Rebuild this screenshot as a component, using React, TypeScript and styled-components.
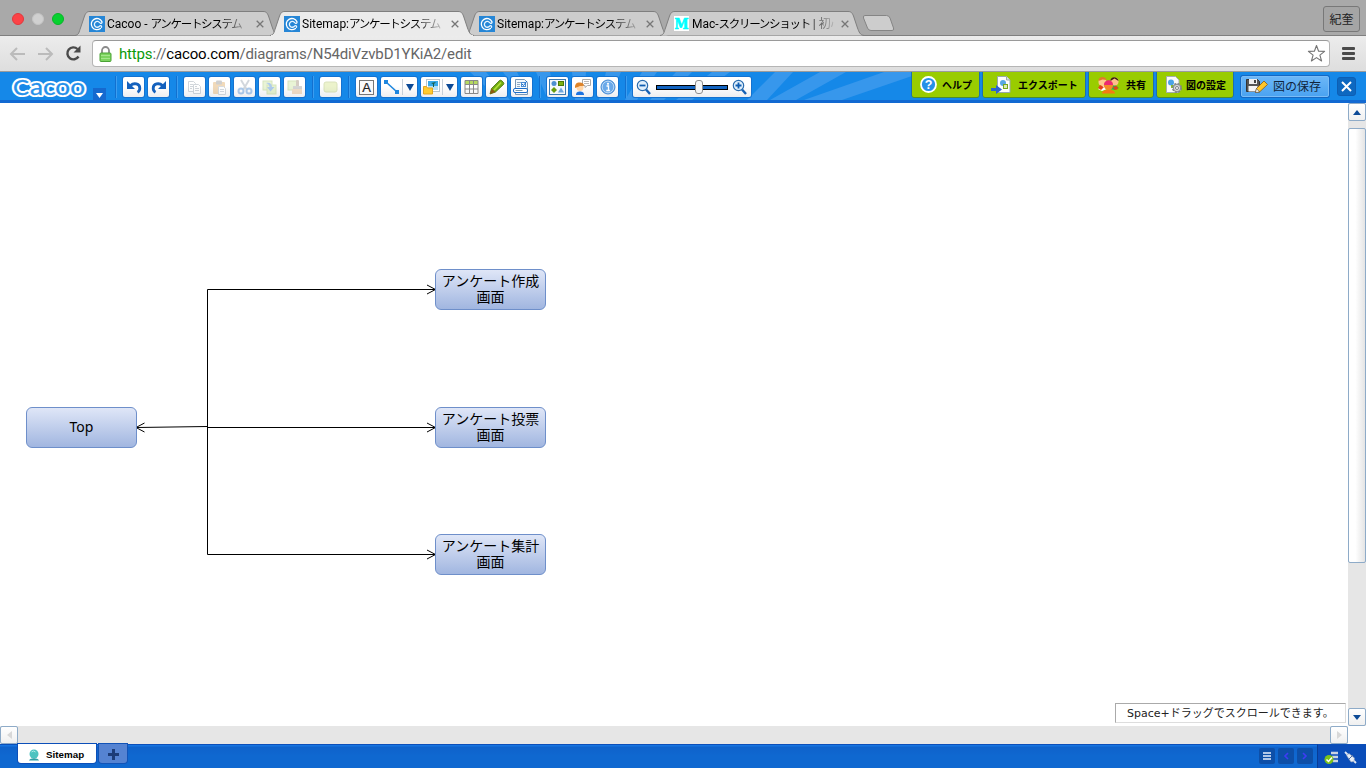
import React from "react";
import styled, { createGlobalStyle, css } from "styled-components";

const jp = `"Noto Sans CJK JP", sans-serif`;

const Global = createGlobalStyle`
  * { box-sizing: border-box; }
  body { margin: 0; overflow: hidden; background: #fff; font-family: Roboto, ${jp}; }
  svg { display: block; flex: none; }
`;

const Window = styled.div`
  width: 1366px;
  height: 768px;
  display: flex;
  flex-direction: column;
  overflow: hidden;
`;

/* ---------- browser frame ---------- */

const TabStrip = styled.div`
  height: 36px;
  flex: none;
  display: flex;
  align-items: flex-end;
  background: #a9a9a9;
  box-shadow: inset 0 -1px #7f7f7f;
`;

const Lights = styled.div`
  display: flex;
  gap: 8px;
  width: 75px;
  padding: 0 0 11px 12px;
`;

const Light = styled.i<{ $fill: string; $edge: string }>`
  width: 12px;
  height: 12px;
  border-radius: 50%;
  background: ${(p) => p.$fill};
  border: 1px solid ${(p) => p.$edge};
`;

const Tab = styled.div<{ $active?: boolean }>`
  position: relative;
  z-index: ${(p) => (p.$active ? 2 : 1)};
  width: 204px;
  height: 25px;
  margin-right: -9px;
  padding: 1px 12px 0 14px;
  display: flex;
  align-items: center;
  gap: 2px;
`;

const TabShape = styled.svg`
  position: absolute;
  left: 0;
  top: 0;
  z-index: -1;
`;

const TabTitle = styled.span`
  width: 142px;
  font: 12px/18px Roboto, ${jp};
  color: #000;
  white-space: nowrap;
  mask-image: linear-gradient(90deg, #000 112px, transparent 146px);
`;

const Kana = styled.span`
  font-size: 11.5px;
  letter-spacing: -1.3px;
`;

const TabClose = styled.svg`
  margin-left: 5px;
`;

const NewTab = styled.svg`
  margin: 0 0 4px 7px;
`;

const Profile = styled.div`
  margin: 0 6px 4px auto;
  width: 37px;
  height: 26px;
  border: 1px solid #787878;
  border-radius: 3px;
  background: #a5a5a5;
  font: 12px/24px ${jp};
  text-align: center;
  color: #222;
`;

const AddressRow = styled.div`
  height: 36px;
  flex: none;
  display: flex;
  align-items: center;
  padding: 0 10px 0 9px;
  background: linear-gradient(#ececec, #dedede);
  border-bottom: 1px solid #9b9b9b;
`;

const NavIcons = styled.div`
  display: flex;
  align-items: center;
  gap: 11px;
  width: 83px;
`;

const AddressBox = styled.div`
  width: 1238px;
  height: 27px;
  display: flex;
  align-items: center;
  padding: 0 3px 0 6px;
  background: #fff;
  border: 1px solid #b5b5b5;
  border-top-color: #9a9a9a;
  border-radius: 4px;
`;

const Url = styled.div`
  flex: 1;
  margin-left: 7px;
  font: 15px/20px Roboto, sans-serif;
  letter-spacing: -0.16px;
  color: #666;
  b { font-weight: 400; color: #0a9a0a; }
  em { font-style: normal; color: #000; }
`;

const MenuBars = styled.div`
  margin-left: 12px;
  width: 13px;
  display: flex;
  flex-direction: column;
  gap: 2px;
  i { height: 3px; border-radius: 1px; background: #4a4a4a; }
`;

/* ---------- editor toolbar ---------- */

const EditorBar = styled.div`
  position: relative;
  z-index: 0;
  height: 31px;
  flex: none;
  display: flex;
  background: #1588e8;
  border-bottom: 3px solid #1269d2;
  padding-left: 11px;
`;

const Rays = styled.svg`
  position: absolute;
  left: 0;
  top: 0;
  z-index: -1;
`;

const Logo = styled.div`
  width: 97px;
  display: flex;
`;

const LogoMenu = styled.div`
  margin: 16px 0 0 5px;
  width: 13px;
  height: 14px;
  background: #1569cf;
  display: flex;
  align-items: center;
  justify-content: center;
`;

const Group = styled.div`
  display: flex;
  gap: 4px;
  padding-top: 5px;
`;

const Separator = styled.i`
  width: 2px;
  height: 22px;
  margin: 4px 6px 0 7px;
  background: linear-gradient(90deg, #1270cf 50%, #3b9df0 50%);
`;

const plate = css`
  background: linear-gradient(#fff 45%, #eceef0);
  border-radius: 2px;
  box-shadow: 0 0 0 1px #1572d0;
`;

const ToolButton = styled.div<{ $disabled?: boolean }>`
  ${plate}
  width: 21px;
  height: 20px;
  display: flex;
  align-items: center;
  justify-content: center;
  svg { opacity: ${(p) => (p.$disabled ? 0.35 : 1)}; }
`;

const SplitButton = styled.div`
  ${plate}
  width: 36px;
  height: 20px;
  display: flex;
  align-items: center;
  > svg:first-child { margin: 0 2px; }
`;

const SplitArrow = styled.span`
  width: 15px;
  height: 16px;
  border-left: 1px solid #c5cfd8;
  display: flex;
  align-items: center;
  justify-content: center;
`;

const ZoomPanel = styled.div`
  ${plate}
  width: 118px;
  height: 20px;
  display: flex;
  align-items: center;
  justify-content: space-between;
  padding: 0 4px 0 3px;
`;

const ZoomTrack = styled.div`
  width: 72px;
  height: 5px;
  border: 1px solid #000;
  background: #1263c0;
  display: flex;
  align-items: center;
  padding-left: 38px;
`;

const ZoomKnob = styled.i`
  width: 8px;
  height: 14px;
  flex: none;
  border: 1px solid #8e8e8e;
  border-radius: 3px;
  background: #f6f6f6;
`;

const Actions = styled.div`
  margin-left: auto;
  display: flex;
  gap: 4px;
  padding-right: 10px;
`;

const GreenButton = styled.div<{ $w: number; $gap: number }>`
  width: ${(p) => p.$w}px;
  height: 25px;
  padding-left: 8px;
  display: flex;
  align-items: center;
  gap: ${(p) => p.$gap}px;
  background: #99cc00;
  border-radius: 0 0 2px 2px;
  box-shadow: 0 1px #4d8b32, 1px 0 #1c6fb0, -1px 0 #1c6fb0;
  font: 700 10px/24px ${jp};
  color: #000;
  white-space: nowrap;
`;

const SaveButton = styled.div`
  margin: 4px 0 0 4px;
  width: 88px;
  height: 21px;
  padding: 0 0 2px 4px;
  display: flex;
  align-items: center;
  gap: 5px;
  border: 1px solid #7abcf6;
  border-radius: 2px;
  background: linear-gradient(#6bb6f7, #4ba3f1);
  box-shadow: 0 0 0 1px #1468c4;
  font: 12px/16px ${jp};
  color: #10253c;
  white-space: nowrap;
`;

const CloseButton = styled.div`
  margin: 5px 0 0 4px;
  width: 19px;
  height: 19px;
  display: flex;
  align-items: center;
  justify-content: center;
  background: #0d68c0;
  border: 1px solid #0d5eb4;
  border-radius: 3px;
`;

/* ---------- drawing area ---------- */

const Workspace = styled.div`
  flex: 1;
  display: grid;
  grid-template: 1fr 18px / 1fr 18px;
  min-height: 0;
`;

const Sheet = styled.div`
  position: relative;
  overflow: hidden;
  background: #fff;
`;

const Connectors = styled.svg`
  position: absolute;
  left: 0;
  top: 0;
`;

const Node = styled.div<{ $x: number; $y: number }>`
  position: absolute;
  left: ${(p) => p.$x}px;
  top: ${(p) => p.$y}px;
  width: 111px;
  height: 41px;
  padding-bottom: 2px;
  display: flex;
  align-items: center;
  justify-content: center;
  border: 1px solid #6e8fca;
  border-radius: 6px;
  background: linear-gradient(#dfe6f7, #a1b6e0);
  font: 14px/16px "Noto Sans", ${jp};
  text-align: center;
  color: #000;
  white-space: pre-line;
`;

const Hint = styled.div`
  position: absolute;
  right: 2px;
  bottom: 3px;
  width: 231px;
  height: 20px;
  padding-left: 11px;
  border: 1px solid #ddd;
  border-top: 1px solid #aaa;
  border-left: 1px solid #aaa;
  background: #fff;
  font: 11px/19px "DejaVu Sans", ${jp};
  color: #222;
  white-space: nowrap;
`;

const VScroll = styled.div`
  display: flex;
  flex-direction: column;
  background: #e6e6e6;
`;

const HScroll = styled.div`
  display: flex;
  justify-content: space-between;
  background: #e6e6e6;
`;

const ScrollButton = styled.div`
  width: 18px;
  height: 18px;
  flex: none;
  display: flex;
  align-items: center;
  justify-content: center;
  border: 1px solid #8eabc8;
  border-radius: 2px;
  background: linear-gradient(#fff, #f0f0f0);
`;

const Thumb = styled.div`
  margin: 7px 0 145px;
  flex: 1;
  border: 1px solid #8eabc8;
  border-radius: 2px;
  background: linear-gradient(90deg, #fff 40%, #e4e4e4);
`;

/* ---------- sheet bar ---------- */

const SheetBar = styled.div`
  height: 24px;
  flex: none;
  display: flex;
  gap: 3px;
  padding-left: 18px;
  background: linear-gradient(#0c4fb9 1px, #1674e0 1px, #1674e0 2px, #0f62cb 3px, #0f68d0 12px);
`;

const SheetTab = styled.div`
  width: 78px;
  height: 19px;
  display: flex;
  align-items: center;
  gap: 6px;
  padding: 2px 0 0 10px;
  background: #fff;
  border-radius: 0 0 3px 3px;
  box-shadow: 0 0 0 1px #0c4fb9;
  font: 700 9.8px/14px "Liberation Sans", sans-serif;
  color: #000;
`;

const AddSheet = styled.div`
  width: 28px;
  height: 19px;
  padding-top: 2px;
  display: flex;
  align-items: center;
  justify-content: center;
  background: #5583d2;
  border-radius: 0 0 3px 3px;
  box-shadow: 0 0 0 1px #1253b7;
`;

const SheetNav = styled.div`
  margin-left: auto;
  display: flex;
  gap: 3px;
  padding: 4px 1px 0 0;
`;

const SheetNavButton = styled.div`
  width: 16px;
  height: 16px;
  display: flex;
  align-items: center;
  justify-content: center;
  background: #0d4fa8;
  border-radius: 2px;
`;

const Status = styled.div`
  width: 49px;
  display: flex;
  gap: 4px;
  padding: 6px 0 0 6px;
  background: #0a4db9;
  border-top: 1px solid #0c4fb9;
  border-left: 1px solid #083c95;
`;

/* ---------- icons ---------- */

const Tri = ({ dir = "down", c = "#0d4a96", w = 8, h = 5 }: { dir?: string; c?: string; w?: number; h?: number }) => {
  const pts: Record<string, string> = {
    down: `0,0 ${w},0 ${w / 2},${h}`,
    up: `0,${h} ${w},${h} ${w / 2},0`,
    left: `${w},0 ${w},${h} 0,${h / 2}`,
    right: `0,0 0,${h} ${w},${h / 2}`,
  };
  return <svg width={w} height={h}><polygon points={pts[dir]} fill={c} /></svg>;
};

const CacooMark = () => (
  <svg width="16" height="16" viewBox="0 0 16 16" fill="none" strokeLinecap="round">
    <rect width="16" height="16" fill="#2686d6" />
    <path d="M11.500 12.400A5.600 5.600 0 1 1 12.900 5.600C13.300 7 12.400 7.700 11.500 7.200" stroke="#fff" strokeWidth="1.300" />
    <path d="M10.600 6.600A2.900 2.900 0 1 0 10.600 10.100C11.600 9.200 13 10 12.500 11.400" stroke="#e8f5ff" strokeWidth="1.300" />
  </svg>
);

const SiteM = () => (
  <svg width="16" height="16" viewBox="0 0 16 16">
    <rect width="15" height="15" fill="#fff" />
    <text x="0.500" y="13" fontFamily="DejaVu Serif" fontWeight="700" fontSize="15" textLength="14" lengthAdjust="spacingAndGlyphs" fill="#0ff" stroke="#0ff" strokeWidth=".7">M</text>
  </svg>
);

const Undo = ({ flip = false }: { flip?: boolean }) => (
  <svg width="16" height="14" viewBox="0 0 16 14">
    <g transform={flip ? "translate(16 0) scale(-1 1)" : undefined}>
      <path d="M4.500 5.500C8 2.300 13.800 3.700 13.800 8.200c0 2-1 3.300-2.300 4" fill="none" stroke="#1461bd" strokeWidth="2.800" />
      <path d="M1 1v8h8z" fill="#1461bd" />
    </g>
  </svg>
);

const Copy = () => (
  <svg width="15" height="15" viewBox="0 0 15 15" fill="#fff" stroke="#7d8b99">
    <path d="M1.500 1.500h5l2 2v8h-7z" /><path d="M3 4.500h3M3 6.500h3M3 8.500h2" />
    <path d="M6.500 4.500h5l2 2v7h-7z" /><path d="M8 8.500h4M8 10.500h4M8 6.500h2" />
  </svg>
);
const Paste = () => (
  <svg width="15" height="15" viewBox="0 0 15 15">
    <rect x="1" y="2" width="12" height="12" rx="1" fill="#d8963c" />
    <rect x="4" y="0.500" width="6" height="4" rx="1" fill="#777" />
    <path d="M6.500 6.500h5l2 2v6h-7z" fill="#fff" stroke="#8a98a6" /><path d="M8 9.500h4M8 11.500h4" stroke="#8a98a6" />
  </svg>
);
const Cut = () => (
  <svg width="16" height="16" viewBox="0 0 16 16" fill="none">
    <path d="M4 1l6 10M12 1L6 11" stroke="#8090a0" strokeWidth="2" />
    <circle cx="4" cy="12" r="2.500" stroke="#1c6dc9" strokeWidth="2" /><circle cx="12" cy="12" r="2.500" stroke="#1c6dc9" strokeWidth="2" />
  </svg>
);
const PasteInto = () => (
  <svg width="15" height="15" viewBox="0 0 15 15">
    <rect x="1" y="1" width="9" height="9" fill="#c3e08c" stroke="#8bb548" />
    <rect x="5" y="5" width="9" height="9" fill="#b8da78" stroke="#8bb548" />
    <path d="M4 3c4-1 6 1 6 4h2.500L8.500 11.500 5 7h2.500C7.500 5.500 6.500 4 4 3z" fill="#1c6dc9" />
  </svg>
);
const Brush = () => (
  <svg width="16" height="16" viewBox="0 0 16 16">
    <rect x="1" y="2" width="9" height="9" fill="#c3e08c" stroke="#8bb548" />
    <rect x="9" y="1" width="3" height="7" rx="1" fill="#8a7355" /><rect x="6" y="7" width="9" height="3" fill="#888" /><rect x="5" y="10" width="10" height="5" fill="#d9a060" />
  </svg>
);
const Shape = () => (
  <svg width="16" height="14" viewBox="0 0 16 14"><rect x="1" y="2" width="13" height="10" rx="2" fill="#c9dd70" stroke="#98ae40" /></svg>
);
const TextIcon = () => (
  <svg width="15" height="15" viewBox="0 0 15 15">
    <rect x="0.500" y="0.500" width="14" height="14" fill="#fafafa" stroke="#777" />
    <text x="7.500" y="12" textAnchor="middle" fontFamily="Liberation Sans" fontSize="13" fill="#222" stroke="#222" strokeWidth=".2">A</text>
  </svg>
);
const LineIcon = () => (
  <svg width="17" height="16" viewBox="0 0 17 16">
    <path d="M3 3L14 13" stroke="#1e86de" strokeWidth="1.600" /><rect x="1" y="1" width="4" height="4" fill="#1e86de" /><rect x="12" y="11" width="4" height="4" fill="#1e86de" />
  </svg>
);
const ImageIcon = () => (
  <svg width="17" height="16" viewBox="0 0 17 16">
    <rect x="3.500" y="0.500" width="13" height="12" fill="#fff" stroke="#b8c4cc" />
    <rect x="5" y="2" width="10" height="5" fill="#36a9e8" /><rect x="5" y="7" width="10" height="4" fill="#b7dff5" />
    <path d="M8 4l5-1-2 2v3h-1V5z" fill="#1b5f4a" />
    <path d="M.5 7.500h3l1 1.500h5v6H.5z" fill="#ffcb2e" stroke="#e5a51c" />
  </svg>
);
const TableIcon = () => (
  <svg width="15" height="15" viewBox="0 0 15 15">
    <rect x="1" y="1" width="13" height="4" fill="#b5d960" />
    <path d="M1 .5h13v13H1zM1 4.500h13M1 9h13M5.500.5v13M9.500.5v13" fill="none" stroke="#888" />
  </svg>
);
const Pencil = () => (
  <svg width="16" height="16" viewBox="0 0 16 16">
    <path d="M1 15l1.500-5.500L10.500 1.500q1-.8 2 0l2 2q.8 1 0 2L6.500 13z" fill="#6faa10" stroke="#44700c" strokeWidth=".8" />
    <path d="M5 11l7-7.500" stroke="#b2df3a" strokeWidth="1.800" /><path d="M1 15l1.500-5.500 4 3.500z" fill="#8f5a10" />
  </svg>
);
const FormIcon = () => (
  <svg width="17" height="16" viewBox="0 0 17 16" fill="none">
    <path d="M2.500.5h9l3 3v12h-12z" fill="#f3f8fd" stroke="#7a98b5" />
    <path d="M4 3.500h4M4 5.500h3M4 7.500h3" stroke="#8fa9c2" /><rect x="8.500" y="3.500" width="4" height="4" stroke="#4a8dd6" /><path d="M9 5l1.500 1.500L14 2" stroke="#1c6dc9" />
    <rect x=".5" y="9.500" width="14" height="4" rx="1.500" fill="#fff" stroke="#1c6dc9" /><path d="M2.500 11.500h7" stroke="#79a" />
  </svg>
);
const StencilIcon = () => (
  <svg width="17" height="16" viewBox="0 0 17 16">
    <rect x=".5" y=".5" width="16" height="15" fill="#f4f8fb" stroke="#3a78b0" />
    <circle cx="5" cy="4.500" r="2.500" fill="#4d8fd0" /><rect x="9.500" y="2.500" width="5" height="4" fill="#7db00f" stroke="#4b7a08" />
    <path d="M5 8l3 3-3 3-3-3z" fill="#689c0c" /><path d="M12 8.500l3 5H9z" fill="#6fa6dc" />
  </svg>
);
const ChatIcon = () => (
  <svg width="18" height="17" viewBox="0 0 18 17">
    <path d="M8.500.5h8v6h-3l-2.500 2v-2H8.500z" fill="#fff" stroke="#aaa" /><path d="M10 2.500h5M10 4.500h5" stroke="#bbb" />
    <circle cx="6" cy="8.500" r="3.500" fill="#ffd6a8" /><path d="M1 8c0-4 3-5 5-4.500 2 0 4 1 4 3-3 1-4 0-5 1L1 9z" fill="#dd842a" />
    <path d="M2 16c0-3 2-3.500 4-3.500s4 .5 4 3.500z" fill="#1c73e0" />
  </svg>
);
const InfoIcon = () => (
  <svg width="16" height="16" viewBox="0 0 16 16">
    <circle cx="8" cy="8" r="7" fill="#6aa9e9" stroke="#478bd3" /><circle cx="8" cy="8" r="5.800" fill="none" stroke="#b9d8f7" />
    <circle cx="8" cy="4.800" r="1.100" fill="#fff" /><path d="M6.500 7h2v4.500M6.300 11.500h3.600" stroke="#fff" strokeWidth="1.300" fill="none" />
  </svg>
);
const Magnifier = ({ plus = false }: { plus?: boolean }) => (
  <svg width="15" height="16" viewBox="0 0 15 16" fill="none">
    <path d="M10 10.500l4 4.500" stroke="#1561b5" strokeWidth="2.400" />
    <circle cx="6.500" cy="6.500" r="5.200" fill="#e1f0fc" stroke="#2a6cae" strokeWidth="1.200" />
    <path d={plus ? "M3.500 6.500h6M6.500 3.500v6" : "M3.500 6.500h6"} stroke="#0f5cb0" strokeWidth="1.800" />
  </svg>
);
const HelpIcon = () => (
  <svg width="17" height="17" viewBox="0 0 17 17">
    <circle cx="8.500" cy="8.500" r="7.500" fill="#2590e8" stroke="#fff" strokeWidth="1.800" />
    <text x="8.500" y="13" textAnchor="middle" fontFamily="Liberation Sans" fontWeight="700" fontSize="12.500" fill="#fff">?</text>
  </svg>
);
const ExportIcon = () => (
  <svg width="20" height="18" viewBox="0 0 20 18">
    <path d="M6.500.5h9l3.500 3.500v12.500H6.500z" fill="#fdfdfd" stroke="#9aa" /><path d="M15.500.5V4H19" fill="#e5e5e5" stroke="#9aa" />
    <circle cx="12" cy="7" r="3" fill="#58a7e4" /><rect x="12.500" y="8.500" width="4" height="4" fill="#dcebb8" stroke="#77a81d" />
    <path d="M0 12h5V9l6 4.500L5 18v-3H0z" fill="#2c64cf" />
  </svg>
);
const ShareIcon = () => (
  <svg width="23" height="18" viewBox="0 0 23 18">
    <path d="M1 13l5-4 4 4-5 2z" fill="#fff" /><path d="M22 12l-5-4-4 5 5 1z" fill="#3aa648" />
    <circle cx="5.500" cy="6" r="4" fill="#ffc98d" /><path d="M1.500 5C1 0 9 0 9.500 4l-4-.5z" fill="#e07a2a" />
    <circle cx="17.500" cy="5.500" r="4" fill="#ffc08a" /><path d="M13.500 5C13 0 21 0 21.500 5l-4-2.500z" fill="#3b2013" />
    <path d="M5 17.500c0-5 13-5 13 0z" fill="#f57a14" /><path d="M7 11l-4-2-2 3 3 2zM16 11l4-1 1 3-3 1z" fill="#e4431a" />
    <circle cx="11.500" cy="9.500" r="4.500" fill="#f58a28" /><path d="M7 9C7 2.500 16 2.500 16 9z" fill="#ec2a72" />
  </svg>
);
const SettingsIcon = () => (
  <svg width="18" height="18" viewBox="0 0 18 18">
    <path d="M1.500.5h9l3.500 3.500v12.500H1.500z" fill="#fafafa" stroke="#a5aeb0" />
    <circle cx="6" cy="6.500" r="3" fill="#4ba3e6" /><rect x="6" y="9" width="3" height="3" fill="#8bbf2c" />
    <circle cx="12" cy="12" r="4" fill="#d9dadb" stroke="#7d8185" strokeWidth="2" strokeDasharray="2 1.140" />
    <circle cx="12" cy="12" r="3.600" fill="#d9dadb" stroke="#7d8185" strokeWidth=".8" /><circle cx="12" cy="12" r="1.500" fill="#fff" stroke="#7d8185" />
  </svg>
);
const SaveIcon = () => (
  <svg width="22" height="16" viewBox="0 0 22 16">
    <path d="M.5 1.500h11l2 2v10H.5z" fill="#555" stroke="#333" /><rect x="3" y="1" width="8" height="5" fill="#eee" /><rect x="8" y="2" width="2" height="3" fill="#444" /><rect x="2.500" y="8" width="9" height="5.500" fill="#f4f4f4" />
    <path d="M9.500 14.500l1-4L18 3l3.500 3.500-8 7.500z" fill="#ffc62b" stroke="#8a5b10" strokeWidth=".8" /><path d="M9.500 14.500l1-4 3 3.500z" fill="#fff" stroke="#444" strokeWidth=".6" />
  </svg>
);

/* ---------- data ---------- */

const tabs = [
  { latin: "Cacoo - ", kana: "アンケートシステム", icon: <CacooMark /> },
  { latin: "Sitemap:", kana: "アンケートシステム", icon: <CacooMark />, active: true },
  { latin: "Sitemap:", kana: "アンケートシステム", icon: <CacooMark /> },
  { latin: "Mac-", kana: "スクリーンショット", tail: " | 初心", icon: <SiteM /> },
];

const nodes = [
  { x: 26, y: 304, label: "Top" },
  { x: 435, y: 166, label: "アンケート作成\n画面" },
  { x: 435, y: 304, label: "アンケート投票\n画面" },
  { x: 435, y: 431, label: "アンケート集計\n画面" },
];

type TabProps = { latin: string; kana: string; tail?: string; icon: React.ReactNode; active?: boolean };

const BrowserTab = ({ latin, kana, tail, icon, active }: TabProps) => (
  <Tab $active={active}>
    <TabShape width="204" height="25" viewBox="0 0 204 25">
      <path
        d="M0 24.500C4 24 4 21 5.500 17L9.500 5C11 1.500 12 .5 15 .5H188C191 .5 192 1.500 193.500 5L197.500 17C199 21 200 24 204 24.500"
        fill={active ? "#ebebeb" : "#cdcdcd"}
        stroke="#7f7f7f"
      />
      {active && <path d="M1 24.500H203" stroke="#ebebeb" />}
    </TabShape>
    {icon}
    <TabTitle>{latin}<Kana>{kana}</Kana>{tail}</TabTitle>
    <TabClose width="8" height="8" viewBox="0 0 8 8"><path d="M.7.7l6.600 6.600M7.300.7L.7 7.300" stroke="#777" strokeWidth="1.300" /></TabClose>
  </Tab>
);

const Wordmark = (props: React.SVGProps<SVGTextElement>) => (
  <text fontFamily="Lato" strokeLinejoin="round" {...props}>
    <tspan x="2" y="22.500" fontSize="21" textLength="16" lengthAdjust="spacingAndGlyphs">C</tspan>
    <tspan x="19" y="22.500" fontSize="23" textLength="55" lengthAdjust="spacingAndGlyphs">acoo</tspan>
  </text>
);

export default function App() {
  return (
    <Window>
      <Global />
      <TabStrip>
        <Lights>
          <Light $fill="#fc4246" $edge="#e0383c" />
          <Light $fill="#d0d0d0" $edge="#c4c4c4" />
          <Light $fill="#06d12f" $edge="#08b428" />
        </Lights>
        {tabs.map((t, i) => <BrowserTab key={i} {...t} />)}
        <NewTab width="33" height="17" viewBox="0 0 33 17">
          <path d="M3 .5H24.500Q27 .5 28 3L31.500 13Q32.300 15.500 30 15.500H9Q6.500 15.500 5.500 13L1.500 3Q.8.5 3 .5z" fill="#cdcdcd" stroke="#858585" />
        </NewTab>
        <Profile>紀奎</Profile>
      </TabStrip>

      <AddressRow>
        <NavIcons>
          <svg width="17" height="14" viewBox="0 0 17 14" fill="none" stroke="#bbb" strokeWidth="2"><path d="M16 7H2M8 1L2 7l6 6" /></svg>
          <svg width="17" height="14" viewBox="0 0 17 14" fill="none" stroke="#bbb" strokeWidth="2"><path d="M1 7h14M9 1l6 6-6 6" /></svg>
          <svg width="17" height="17" viewBox="0 0 17 17"><path d="M13.500 11.500A6 6 0 1 1 12.500 4" fill="none" stroke="#4a4a4a" strokeWidth="2.400" /><path d="M15.500.5v7h-7z" fill="#4a4a4a" /></svg>
        </NavIcons>
        <AddressBox>
          <svg width="13" height="16" viewBox="0 0 13 16">
            <path d="M3 8V4.500a3.500 3.500 0 0 1 7 0V8" fill="none" stroke="#8b8b8b" strokeWidth="1.800" />
            <rect x="1" y="7" width="11" height="8.500" rx="1" fill="#7cd35f" stroke="#4aa235" />
            <path d="M2 9.500h9M2 12.500h9" stroke="#a4e68b" />
          </svg>
          <Url><b>https</b>://<em>cacoo.com</em>/diagrams/N54diVzvbD1YKiA2/edit</Url>
          <svg width="19" height="19" viewBox="0 0 19 19"><path d="M9.500 1.500l2.100 5.700 6 .2-4.700 3.700 1.700 5.900-5.100-3.400L4.400 17l1.700-5.900L1.400 7.400l6-.2z" fill="#fff" stroke="#757575" strokeWidth="1.100" strokeLinejoin="round" /></svg>
        </AddressBox>
        <MenuBars><i /><i /><i /></MenuBars>
      </AddressRow>

      <EditorBar>
        <Rays width="912" height="28" viewBox="0 0 912 28">
          <g fill="#3797ec">
            <path d="M470 0h16l24 28h-10zM503 0h14l14 28h-8zM536 0h14l6 28h-8zM572 0h14l-2 28h-9zM606 0h15l-12 28h-10zM642 0h15l-20 28h-12zM676 0h16l-28 28h-14zM712 0h18l-38 28h-16zM775 0h18l-26 28h-20zM820 0h26l-50 28h-26zM884 0h28v4l-70 24h-38z" />
          </g>
        </Rays>
        <Logo>
          <svg width="77" height="28" viewBox="0 0 77 28">
            <Wordmark fill="#fff" stroke="#fff" strokeWidth="4.200" />
            <Wordmark fill="#2590ea" stroke="#2590ea" strokeWidth=".3" />
          </svg>
          <LogoMenu><Tri c="#fff" w={7} h={5} /></LogoMenu>
        </Logo>
        <Separator />
        <Group><ToolButton><Undo /></ToolButton><ToolButton><Undo flip /></ToolButton></Group>
        <Separator />
        <Group>
          <ToolButton $disabled><Copy /></ToolButton><ToolButton $disabled><Paste /></ToolButton><ToolButton $disabled><Cut /></ToolButton>
          <ToolButton $disabled><PasteInto /></ToolButton><ToolButton $disabled><Brush /></ToolButton>
        </Group>
        <Separator />
        <Group><ToolButton $disabled><Shape /></ToolButton></Group>
        <Separator />
        <Group>
          <ToolButton><TextIcon /></ToolButton>
          <SplitButton><LineIcon /><SplitArrow><Tri h={7} /></SplitArrow></SplitButton>
          <SplitButton><ImageIcon /><SplitArrow><Tri h={7} /></SplitArrow></SplitButton>
          <ToolButton><TableIcon /></ToolButton><ToolButton><Pencil /></ToolButton><ToolButton><FormIcon /></ToolButton>
        </Group>
        <Separator />
        <Group><ToolButton><StencilIcon /></ToolButton><ToolButton><ChatIcon /></ToolButton><ToolButton><InfoIcon /></ToolButton></Group>
        <Separator />
        <Group>
          <ZoomPanel><Magnifier /><ZoomTrack><ZoomKnob /></ZoomTrack><Magnifier plus /></ZoomPanel>
        </Group>
        <Actions>
          <GreenButton $w={67} $gap={5}><HelpIcon />ヘルプ</GreenButton>
          <GreenButton $w={102} $gap={7}><ExportIcon />エクスポート</GreenButton>
          <GreenButton $w={64} $gap={6}><ShareIcon />共有</GreenButton>
          <GreenButton $w={76} $gap={3}><SettingsIcon />図の設定</GreenButton>
          <SaveButton><SaveIcon />図の保存</SaveButton>
          <CloseButton><svg width="11" height="11" viewBox="0 0 11 11"><path d="M1 1l9 9M10 1l-9 9" stroke="#fff" strokeWidth="2" /></svg></CloseButton>
        </Actions>
      </EditorBar>

      <Workspace>
        <Sheet>
          <Connectors width="600" height="500" viewBox="0 0 600 500" fill="none" stroke="#000">
            <path d="M435 186.500H207.500V451.500H435M207.500 324.500H435M207.500 323.500L137 324.500" />
            <path d="M427 182l8.500 4.500-8.500 4.500M427 320l8.500 4.500-8.500 4.500M427 447l8.500 4.500-8.500 4.500M144.500 320l-8.500 4.500 8.500 4.500" />
          </Connectors>
          {nodes.map((n, i) => <Node key={i} $x={n.x} $y={n.y}>{n.label}</Node>)}
          <Hint>Space+ドラッグでスクロールできます。</Hint>
        </Sheet>
        <VScroll>
          <ScrollButton><Tri dir="up" /></ScrollButton>
          <Thumb />
          <ScrollButton><Tri /></ScrollButton>
        </VScroll>
        <HScroll>
          <ScrollButton><Tri dir="left" c="#d8d8d8" w={5} h={8} /></ScrollButton>
          <ScrollButton><Tri dir="right" c="#d8d8d8" w={5} h={8} /></ScrollButton>
        </HScroll>
      </Workspace>

      <SheetBar>
        <SheetTab>
          <svg width="12" height="12" viewBox="0 0 12 12"><circle cx="6" cy="5" r="4.500" fill="#4dc3c0" /><path d="M1 11.500c1-3 9-3 10 0z" fill="#2f9fa5" /><path d="M3.500 3q2-2 4 0" stroke="#a9ebe5" fill="none" /></svg>
          Sitemap
        </SheetTab>
        <AddSheet><svg width="11" height="11" viewBox="0 0 11 11"><path d="M0 5.500h11M5.500 0v11" stroke="#1c3c78" strokeWidth="3" /></svg></AddSheet>
        <SheetNav>
          <SheetNavButton><svg width="8" height="8"><path d="M0 1h8M0 4h8M0 7h8" stroke="#e6eefb" strokeWidth="1.500" /></svg></SheetNavButton>
          <SheetNavButton><svg width="6" height="8"><path d="M5 1L2 4l3 3" fill="none" stroke="#3f3cf5" strokeWidth="1.600" /></svg></SheetNavButton>
          <SheetNavButton><svg width="6" height="8"><path d="M1 1l3 3-3 3" fill="none" stroke="#3f3cf5" strokeWidth="1.600" /></svg></SheetNavButton>
        </SheetNav>
        <Status>
          <svg width="16" height="14" viewBox="0 0 16 14"><path d="M7 2h7M8 6h6M9 10h5" stroke="#c9d3e2" strokeWidth="2.500" /><circle cx="5" cy="8.500" r="4.500" fill="#7cc21b" /><path d="M2.500 8.500l2 2 3.500-4" stroke="#fff" strokeWidth="1.500" fill="none" /></svg>
          <svg width="13" height="13" viewBox="0 0 13 13"><path d="M1 1l11 11" stroke="#dfe7f3" strokeWidth="1.800" /><path d="M2.500 4.500l2.500-2 5.500 4.500-.5 3.500-3 .5z" fill="#e8eef7" stroke="#7f92b0" strokeWidth=".6" /><path d="M5 8l4-4" stroke="#4869a4" /></svg>
        </Status>
      </SheetBar>
    </Window>
  );
}
